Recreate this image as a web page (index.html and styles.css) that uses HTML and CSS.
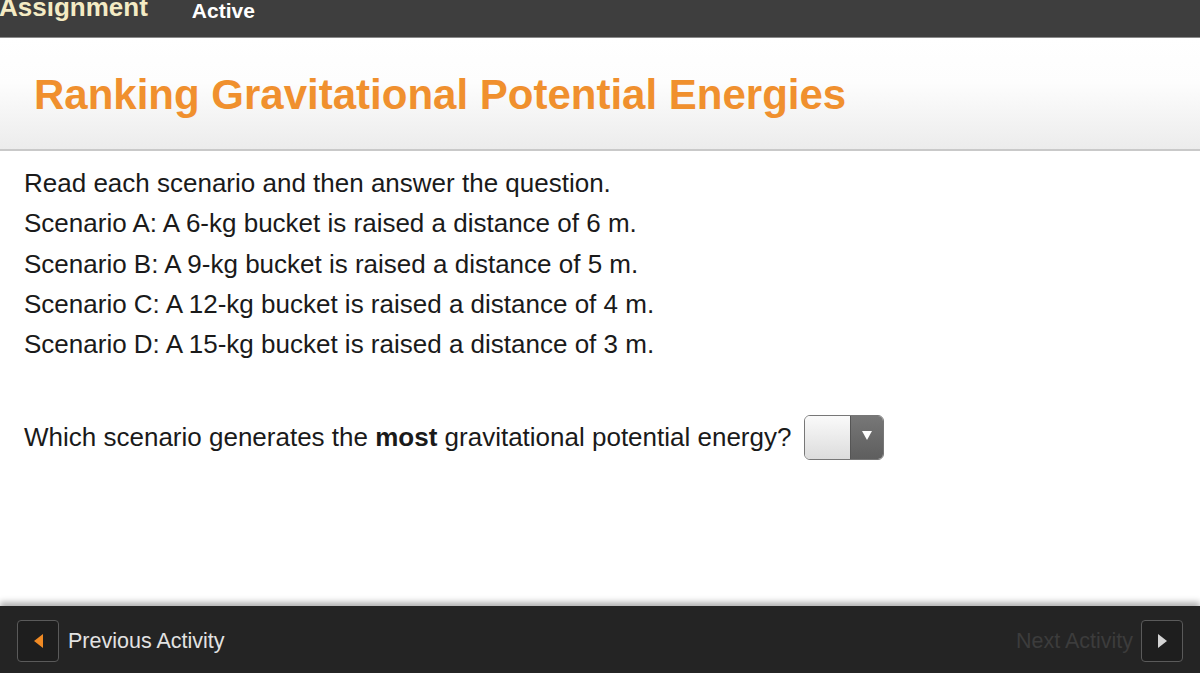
FILE: index.html
```html
<!DOCTYPE html>
<html lang="en">
<head>
  <meta charset="UTF-8" />
  <title>Ranking Gravitational Potential Energies</title>
  <link rel="stylesheet" href="styles.css">
</head>
<body>
  <div class="page">
    <!-- Barra superior -->
    <header class="topbar">
      <span class="topbar-title">Assignment</span>
      <span class="topbar-status">Active</span>
    </header>

    <div class="heading">
      <h1>Ranking Gravitational Potential Energies</h1>
    </div>

    <main class="content">
      <p>Read each scenario and then answer the question.</p>
      <p>Scenario A: A 6-kg bucket is raised a distance of 6 m.</p>
      <p>Scenario B: A 9-kg bucket is raised a distance of 5 m.</p>
      <p>Scenario C: A 12-kg bucket is raised a distance of 4 m.</p>
      <p>Scenario D: A 15-kg bucket is raised a distance of 3 m.</p>

      <div class="question">
        <span>Which scenario generates the <b>most</b> gravitational potential energy?</span>
        <div class="select">
          <div class="select-value"></div>
          <div class="select-arrow">
            <svg width="10" height="9" viewBox="0 0 10 9"><path d="M0 0 L10 0 L5 9 Z" fill="#fff"/></svg>
          </div>
        </div>
      </div>
    </main>

    <!-- Navegación inferior -->
    <footer class="footer">
      <div class="nav prev">
        <div class="nav-btn">
          <svg width="9" height="14" viewBox="0 0 9 14"><path d="M9 0 L9 14 L0 7 Z" fill="#f08a24"/></svg>
        </div>
        <span>Previous Activity</span>
      </div>
      <div class="nav next">
        <span>Next Activity</span>
        <div class="nav-btn">
          <svg width="9" height="14" viewBox="0 0 9 14"><path d="M0 0 L0 14 L9 7 Z" fill="#d4d4d4"/></svg>
        </div>
      </div>
    </footer>
  </div>
</body>
</html>
```

FILE: styles.css
```css
body {
  margin: 0;
  padding: 0;
  font-family: "Liberation Sans", Arial, sans-serif;
  background: #fff;
}

.page {
  display: flex;
  flex-direction: column;
  height: 673px;
  overflow: hidden;
}

.topbar {
  height: 37px;
  background: #3e3e3e;
  border-bottom: 1px solid #8a8a8a;
  display: flex;
  align-items: flex-start;
  flex-shrink: 0;
}

.topbar-title {
  color: #f4ebc4;
  font-weight: bold;
  font-size: 26px;
  line-height: 14px;
  margin-left: -1px;
}

.topbar-status {
  color: #fff;
  font-weight: bold;
  font-size: 21px;
  line-height: 16px;
  margin-left: 44px;
  margin-top: 3px;
}

.heading {
  height: 113px;
  background: linear-gradient(#ffffff 0%, #fdfdfd 40%, #ececec 100%);
  border-bottom: 2px solid #c9c9c9;
  display: flex;
  align-items: center;
  padding: 2px 0 0 34px;
  box-sizing: border-box;
  flex-shrink: 0;
}

.heading h1 {
  margin: 0;
  color: #f0902e;
  font-size: 42px;
  font-weight: bold;
}

.content {
  flex: 1;
  padding: 12px 24px 0;
  color: #1a1a1a;
  font-size: 26px;
}

.content p {
  margin: 0;
  line-height: 40.3px;
}

.question {
  display: flex;
  align-items: center;
  margin-top: 51px;
}

.select {
  display: flex;
  width: 80px;
  height: 45px;
  margin-left: 13px;
  border: 1px solid #777;
  border-radius: 6px;
  overflow: hidden;
  box-sizing: border-box;
}

.select-value {
  flex: 1;
  background: linear-gradient(#fafafa, #dcdcdc);
}

.select-arrow {
  width: 33px;
  background: linear-gradient(#777, #5e5e5e);
  border-left: 1px solid #555;
  display: flex;
  align-items: flex-start;
  justify-content: center;
  padding-top: 15px;
  box-sizing: border-box;
}

.footer {
  height: 67px;
  background: #242424;
  box-shadow: 0 -4px 6px rgba(0, 0, 0, 0.3);
  display: flex;
  justify-content: space-between;
  align-items: center;
  padding: 3px 17px 0;
  box-sizing: border-box;
  flex-shrink: 0;
}

.nav {
  display: flex;
  align-items: center;
  font-size: 21.5px;
}

.prev span {
  color: #e2e2e2;
  margin-left: 9px;
}

.next span {
  color: #3c3c3c;
  margin-right: 8px;
}

.nav-btn {
  width: 42px;
  height: 42px;
  border: 1px solid #5a5a5a;
  border-radius: 4px;
  background: #1e1e1e;
  display: flex;
  align-items: center;
  justify-content: center;
  box-sizing: border-box;
}
```
